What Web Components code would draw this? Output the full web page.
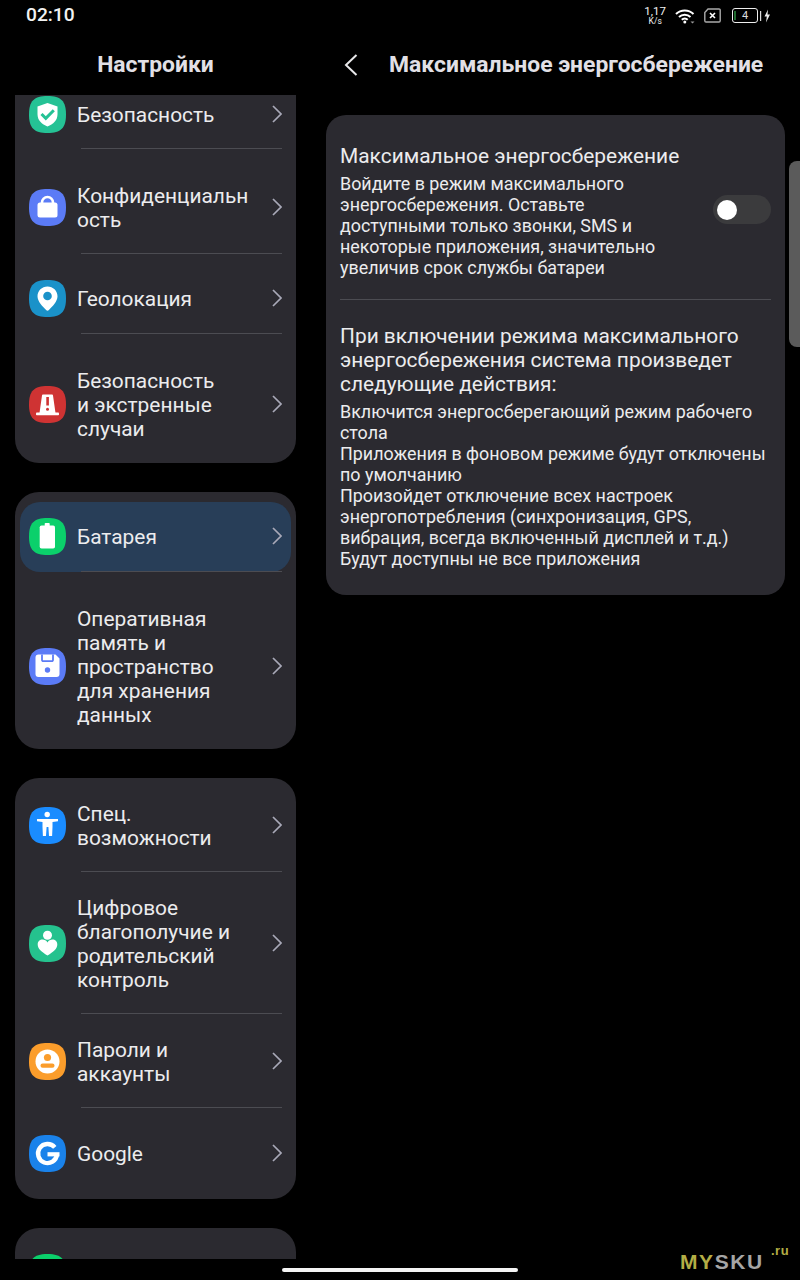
<!DOCTYPE html>
<html lang="ru"><head><meta charset="utf-8"><title>Настройки</title>
<style>
html,body{margin:0;padding:0;background:#000;width:800px;height:1280px;overflow:hidden;font-family:Roboto,"Noto Sans",sans-serif;color:#ececee}
</style></head><body>
<settings-app></settings-app>
<script>
const SQ='M18.5 0C32 0 37 5 37 18.5S32 37 18.5 37 0 32 0 18.5 5 0 18.5 0Z';
const GLYPHS={
shield:['#25c295','<path d="M18.5 7l10 3.500v7.500c0 6.500-4.300 10.300-10 12.500-5.700-2.200-10-6-10-12.500v-7.500z" fill="#fff"/><path d="M12.500 18l4.300 4.300 8-8" fill="none" stroke="#25c295" stroke-width="3"/>'],
lock:['#5b7bf6','<path d="M13 14v-.5a5.500 5.500 0 0 1 11 0v.5" fill="none" stroke="#fff" stroke-width="2.600"/><rect x="8.500" y="13.500" width="20" height="15" rx="2.500" fill="#fff"/>'],
pin:['#1a92c9','<path d="M18.500 6.500c5.600 0 10 4.300 10 9.800 0 5.200-5 10.300-8.600 13.700a2 2 0 0 1-2.800 0c-3.600-3.400-8.600-8.500-8.600-13.700 0-5.500 4.400-9.800 10-9.800z" fill="#fff"/><circle cx="18.500" cy="16" r="4.300" fill="#1a92c9"/>'],
alarm:['#cf3333','<path d="M14 8.500h9a1 1 0 0 1 1 1l2.500 17.500h-16L13 9.500a1 1 0 0 1 1-1z" fill="#fff"/><rect x="7" y="26.500" width="23" height="2.800" rx=".8" fill="#fff"/><rect x="17.300" y="11" width="2.600" height="8.500" fill="#cf3333"/><circle cx="18.500" cy="23.300" r="1.500" fill="#cf3333"/>'],
battery:['#0bd06b','<rect x="15.700" y="5" width="5" height="3.500" rx=".8" fill="#fff"/><rect x="10.700" y="7.500" width="15.300" height="23" rx="1.800" fill="#fff"/>'],
floppy:['#5b7bf6','<path d="M9.500 6.500h17l4 4v15.500a3 3 0 0 1-3 3h-18a3 3 0 0 1-3-3v-16.500a3 3 0 0 1 3-3z" fill="#fff"/><path d="M13 6.500v5.500a1.200 1.200 0 0 0 1.200 1.200h8.600a1.200 1.200 0 0 0 1.200-1.200v-5.500" fill="none" stroke="#5b7bf6" stroke-width="1.800"/><circle cx="18.500" cy="22" r="2.700" fill="#5b7bf6"/>'],
access:['#1a8cff','<circle cx="18.200" cy="7.500" r="2.700" fill="#fff"/><path d="M8 12h21v2.200l-5.500.8h-10L8 14.200z" fill="#fff"/><path d="M13.500 14h10v6l-.4 9h-3.100l-.6-9h-1.800l-.6 9h-3.100l-.4-9z" fill="#fff"/>'],
heart:['#25c28e','<circle cx="18.500" cy="10.300" r="4.500" fill="#fff"/><path d="M18.500 30.500c-6-3.600-9.800-6.700-9.800-11 0-3 2.300-4.900 4.800-4.900 2 0 3.800 1 5 2.800 1.200-1.800 3-2.800 5-2.800 2.500 0 4.800 1.900 4.800 4.900 0 4.300-3.800 7.400-9.800 11z" fill="#fff"/>'],
account:['#fb9d2b','<circle cx="18.500" cy="18.500" r="12" fill="#fff"/><circle cx="18.500" cy="14.500" r="3.600" fill="#fb9d2b"/><rect x="11.500" y="20.500" width="14" height="4.300" rx="2.100" fill="#fb9d2b"/>'],
google:['#1a82ea','<path d="M25.800 12.400A9.500 9.500 0 1 0 28 19.500" fill="none" stroke="#fff" stroke-width="4.400"/><path d="M18.500 17.200h12v4.200h-12z" fill="#fff"/>'],
green:['#0bd06b','']
};
const def=(n,html)=>{
  customElements.define(n,class extends HTMLElement{constructor(){super();const r=this.attachShadow({mode:'open'});r.innerHTML=typeof html==='function'?html(this):html;}});
};
def('set-icon',e=>{const g=GLYPHS[e.getAttribute('name')];return `<style>:host{display:block;width:37px;height:37px;flex:none;margin:-8px 0 -6px}svg{display:block}</style><svg width="37" height="37" viewBox="0 0 37 37"><path d="${SQ}" fill="${g[0]}"/>${g[1]}</svg>`});
def('set-row',`<style>
:host{display:block;position:relative;--pt:35px;--pb:21px}
.h{display:none;position:absolute;left:5px;right:5px;bottom:0;top:10px;border-radius:20px;background:#283e58}
:host([active]) .h{display:block}
.r{position:relative;display:flex;align-items:center;padding:var(--pt) 14px var(--pb) 14px}
.t{flex:1;margin-left:11px;font-size:20.900px;line-height:24px;white-space:nowrap;color:#ececee}
.c{flex:none;display:block;margin-top:-2px}
.d{display:none;position:relative;height:1px;margin:0 14px 0 66px;background:#4c4c52}
:host([divider]) .d{display:block}
</style><div class="h"></div><div class="r"><slot name="icon"></slot><div class="t"><slot></slot></div>
<svg class="c" width="10" height="18" viewBox="0 0 10 18"><path d="M1 1l8 8-8 8" fill="none" stroke="#a9a9b8" stroke-width="1.700"/></svg></div><div class="d"></div>`);
def('set-card',`<style>:host{display:block;background:#2b2a30;border-radius:24px;margin-bottom:29px}</style><slot></slot>`);
def('status-bar',`<style>
:host{display:flex;align-items:center;height:30px;padding:0 29px 0 26px;box-sizing:border-box;color:#f2f2f2}
.time{font-size:19.200px;font-weight:500;line-height:30px}
.sp{flex:1}
.speed{display:flex;flex-direction:column;align-items:center;font-size:11.500px;line-height:11px;margin-right:9px;padding-top:1px}
.speed small{font-size:8.500px;line-height:8px}
svg,.bat{display:block;flex:none;margin-top:1px}
.bat{position:relative;width:26px;height:15px;box-sizing:border-box;border:1.300px solid #eee;border-radius:3px;margin-left:11px;margin-right:2px;display:flex;align-items:center;justify-content:center;font-size:11px;line-height:12px;color:#ddd}
.bat i{position:absolute;left:1px;top:2px;bottom:2px;width:1.500px;background:#1f6a2e}
</style>
<span class="time">02:10</span><span class="sp"></span>
<span class="speed">1,17<small>K/s</small></span>
<svg width="20" height="16" viewBox="0 0 20 16"><g fill="none" stroke="#fff" stroke-width="2"><path d="M1 6a12.500 12.500 0 0 1 17.500 0"/><path d="M4 9a8.200 8.200 0 0 1 11.500 0"/><path d="M6.800 11.800a4.200 4.200 0 0 1 5.900 0"/></g><circle cx="9.800" cy="14" r="1.500" fill="#fff"/><path d="M15.500 13.500h4l-2 2z" fill="#999"/></svg>
<svg style="margin-left:8px" width="18" height="15" viewBox="0 0 18 15"><path d="M5 1h11a1.200 1.200 0 0 1 1.200 1.200v10.600A1.200 1.200 0 0 1 16 14H3a1.200 1.200 0 0 1-1.200-1.200V4.500z" fill="none" stroke="#aaa" stroke-width="1.400"/><path d="M7 5l5 5M12 5l-5 5" stroke="#fff" stroke-width="1.600"/></svg>
<span class="bat"><i></i>4</span>
<svg width="11" height="15" viewBox="0 0 11 15"><rect x="0" y="3" width="1.200" height="10" fill="#ddd"/><path d="M8 1.500L4.500 8.500h2.300L6 14.500l4-8H7.500z" fill="#eee"/></svg>`);
def('pane-title',`<style>:host{display:flex;align-items:center;justify-content:center;box-sizing:border-box;height:65px;padding-top:4px;font-size:22.900px;font-weight:700;color:#e2e0e6;white-space:nowrap}
:host([start]){justify-content:flex-start;padding-left:18px}
::slotted(svg){margin-right:31px}</style><slot></slot>`);
def('ui-toggle',`<style>:host{display:flex;align-items:center;flex:none;box-sizing:border-box;width:58px;height:29px;padding-left:4px;border-radius:15px;background:#3b3b3d;margin-top:-3px}i{display:block;width:20px;height:20px;border-radius:50%;background:#fff}</style><i></i>`);
def('settings-list',`<style>
:host{display:block;height:1164px;overflow:hidden}
</style><slot></slot>`);
def('detail-card',`<style>
:host{display:block;margin-top:20px;background:#2b2a30;border-radius:20px;padding:29px 14px 24px;color:#ececee;height:480px;box-sizing:border-box}
.top{display:flex;align-items:center;gap:8px}
.tx{flex:1;white-space:nowrap;min-width:0}
h2{margin:0;font-size:20.900px;font-weight:400;line-height:24px;white-space:nowrap}
p{margin:0;font-size:17.900px;line-height:21px;white-space:nowrap}
.top p{margin-top:5px}
hr{border:0;height:1px;background:#4c4c52;margin:21px 0 24px}
.list{margin-top:5px}
</style>
<div class="top"><div class="tx"><h2>Максимальное энергосбережение</h2>
<p>Войдите в режим максимального<br>энергосбережения. Оставьте<br>доступными только звонки, SMS и<br>некоторые приложения, значительно<br>увеличив срок службы батареи</p></div><ui-toggle></ui-toggle></div>
<hr>
<h2>При включении режима максимального<br>энергосбережения система произведет<br>следующие действия:</h2>
<p class="list">Включится энергосберегающий режим рабочего<br>стола<br>Приложения в фоновом режиме будут отключены<br>по умолчанию<br>Произойдет отключение всех настроек<br>энергопотребления (синхронизация, GPS,<br>вибрация, всегда включенный дисплей и т.д.)<br>Будут доступны не все приложения</p>`);
def('settings-app',`<style>
:host{display:block;position:relative;width:800px;height:1280px;overflow:hidden}
.main{display:flex;height:1229px}
.left{width:281px;margin-left:15px}
.right{width:459px;margin-left:30px}
.first{margin-top:-40px}
.home{display:flex;justify-content:center;height:21px;padding-top:9px;box-sizing:border-box}
.home i{display:block;width:236px;height:4px;border-radius:2px;background:#f4f4f4}
.edge{position:absolute;right:0;top:161px;width:11px;height:186px;background:#5b5b5b;border-radius:8px 0 0 8px}
.mark{position:absolute;left:680px;top:1252px;font:700 21px/20px "Liberation Sans",sans-serif;letter-spacing:1.600px;color:#a5a5a5;white-space:nowrap}
.mark b{color:#b3ad45}
.mark sup{position:absolute;left:91px;top:-7px;font-size:13px;line-height:12px;color:#b3ad45;letter-spacing:.5px}
</style>
<status-bar></status-bar>
<div class="main">
<div class="left"><pane-title>Настройки</pane-title>
<settings-list>
<set-card class="first">
<set-row divider style="--pt:48px;--pb:21px"><set-icon slot="icon" name="shield"></set-icon>Безопасность</set-row>
<set-row divider style="--pt:35px;--pb:21px"><set-icon slot="icon" name="lock"></set-icon>Конфиденциальн<br>ость</set-row>
<set-row divider style="--pt:33px;--pb:22px"><set-icon slot="icon" name="pin"></set-icon>Геолокация</set-row>
<set-row style="--pt:35px;--pb:22px"><set-icon slot="icon" name="alarm"></set-icon>Безопасность<br>и экстренные<br>случаи</set-row>
</set-card>
<set-card>
<set-row divider active style="--pt:33px;--pb:22px"><set-icon slot="icon" name="battery"></set-icon>Батарея</set-row>
<set-row style="--pt:35px;--pb:22px"><set-icon slot="icon" name="floppy"></set-icon>Оперативная<br>память и<br>пространство<br>для хранения<br>данных</set-row>
</set-card>
<set-card>
<set-row divider style="--pt:24px;--pb:21px"><set-icon slot="icon" name="access"></set-icon>Спец.<br>возможности</set-row>
<set-row divider style="--pt:24px;--pb:21px"><set-icon slot="icon" name="heart"></set-icon>Цифровое<br>благополучие и<br>родительский<br>контроль</set-row>
<set-row divider style="--pt:24px;--pb:21px"><set-icon slot="icon" name="account"></set-icon>Пароли и<br>аккаунты</set-row>
<set-row style="--pt:34px;--pb:33px"><set-icon slot="icon" name="google"></set-icon>Google</set-row>
</set-card>
<set-card style="height:60px;overflow:hidden"><set-row style="--pt:34px;--pb:0px"><set-icon slot="icon" name="green"></set-icon></set-row></set-card>
</settings-list></div>
<div class="right"><pane-title start><svg width="14" height="24" viewBox="0 0 14 24"><path d="M12.500 2L2 12l10.500 10" fill="none" stroke="#e8e8ea" stroke-width="2"/></svg>Максимальное энергосбережение</pane-title>
<detail-card></detail-card></div>
</div>
<div class="home"><i></i></div>
<div class="edge"></div>
<div class="mark"><b>MY</b>SKU<sup>.ru</sup></div>`);
</script>
</body></html>
